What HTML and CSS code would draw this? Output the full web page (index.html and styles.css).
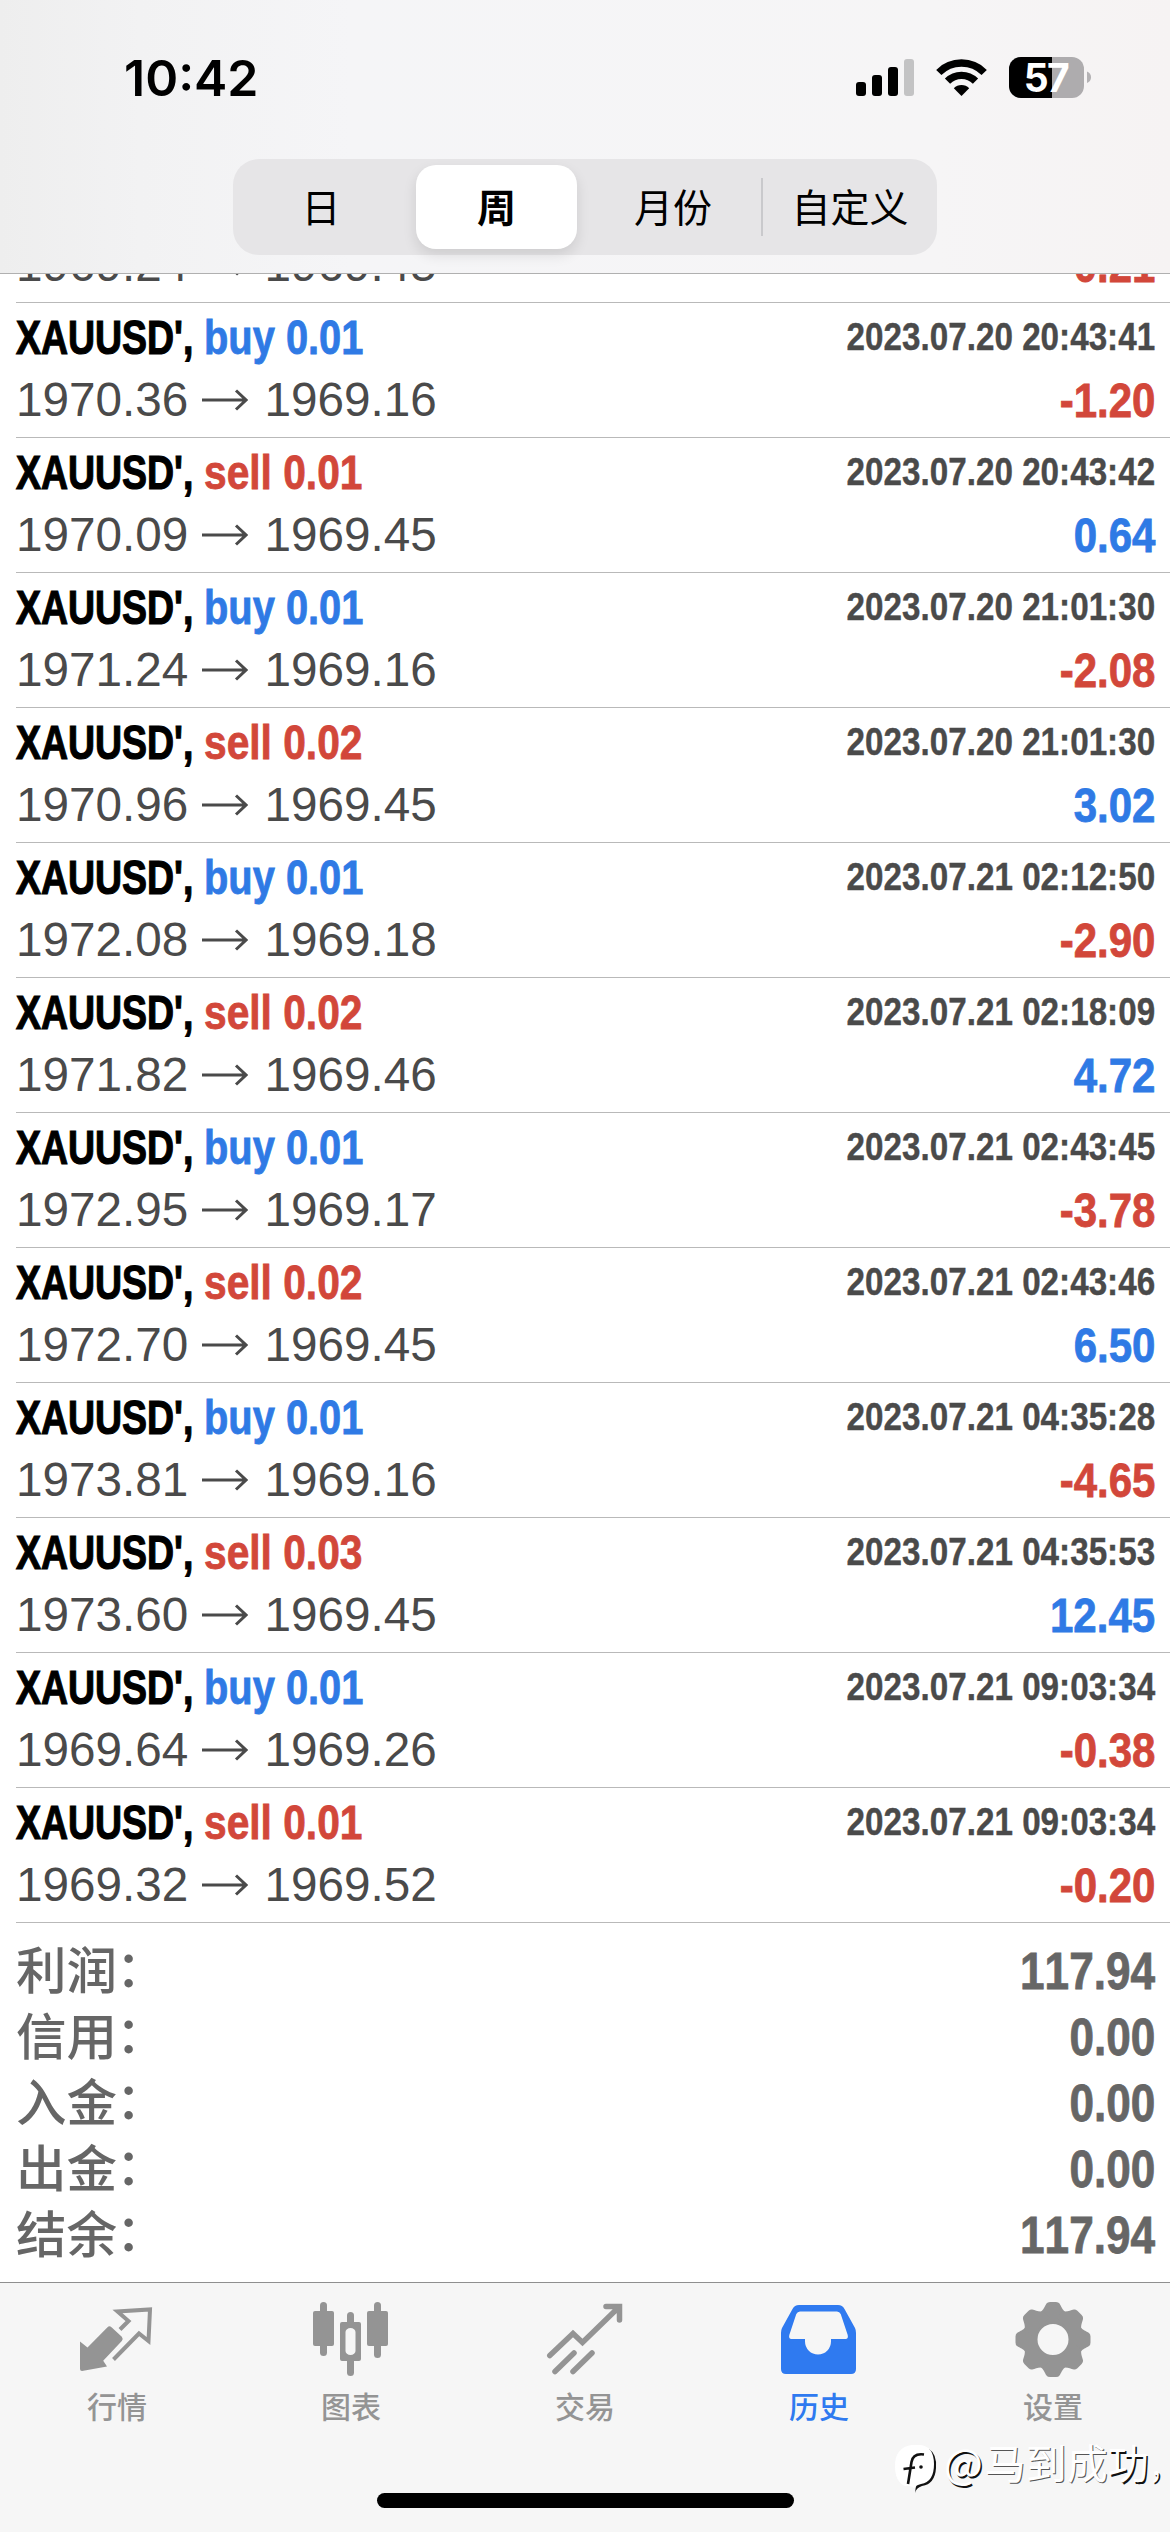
FILE: index.html
```html
<!DOCTYPE html>
<html lang="zh-CN">
<head>
<meta charset="utf-8">
<title>历史</title>
<link rel="stylesheet" href="styles.css">
</head>
<body>
<div class="screen">
  <header class="header">
    <div class="status">
      <span class="clock">10:42</span>
      <svg class="status-icons" width="240" height="48" viewBox="856 54 240 48">
        <rect x="856" y="82" width="10" height="14" rx="3"/>
        <rect x="872" y="75" width="10" height="21" rx="3"/>
        <rect x="888" y="67" width="10" height="29" rx="3"/>
        <rect x="904" y="59" width="10" height="37" rx="3" fill="#c3c3c4"/>
        <g fill="none" stroke="#000" stroke-width="7.4">
          <path d="M938.8 72.5A32 32 0 0 1 984.2 72.5"/>
          <path d="M947.5 81.2A19.8 19.8 0 0 1 975.5 81.2"/>
        </g>
        <path d="M961.5 96L953.8 88.2A11 11 0 0 1 969.2 88.2Z"/>
        <rect x="1009" y="57" width="75" height="41" rx="12" fill="#aeacae"/>
        <path d="M1052 57H1021a12 12 0 0 0-12 12V86a12 12 0 0 0 12 12H1052Z"/>
        <path d="M1087 71.5c5.4 2 5.4 9.500 0 11.500Z" fill="#b4b2b4"/>
        <text class="charge" x="1046" y="92" text-anchor="middle">57</text>
      </svg>
    </div>
    <nav class="segments">
      <span class="segment">日</span>
      <span class="segment selected">周</span>
      <span class="segment">月份</span>
      <span class="segment divided">自定义</span>
    </nav>
  </header>

  <main class="deals">
    <div class="deal partial">
      <div class="line quote"><span class="prices">1969.24<svg class="arrow" viewBox="0 0 46 22"><path d="M0 11H44M34 1.500L44 11L34 20.500"/></svg>1969.45</span><span class="result loss">-0.21</span></div>
    </div>
    <div class="deal">
      <div class="line"><span class="title"><span class="symbol">XAUUSD',</span><span class="side buy">buy 0.01</span></span><time>2023.07.20 20:43:41</time></div>
      <div class="line quote"><span class="prices">1970.36<svg class="arrow" viewBox="0 0 46 22"><path d="M0 11H44M34 1.500L44 11L34 20.500"/></svg>1969.16</span><span class="result loss">-1.20</span></div>
    </div>
    <div class="deal">
      <div class="line"><span class="title"><span class="symbol">XAUUSD',</span><span class="side sell">sell 0.01</span></span><time>2023.07.20 20:43:42</time></div>
      <div class="line quote"><span class="prices">1970.09<svg class="arrow" viewBox="0 0 46 22"><path d="M0 11H44M34 1.500L44 11L34 20.500"/></svg>1969.45</span><span class="result gain">0.64</span></div>
    </div>
    <div class="deal">
      <div class="line"><span class="title"><span class="symbol">XAUUSD',</span><span class="side buy">buy 0.01</span></span><time>2023.07.20 21:01:30</time></div>
      <div class="line quote"><span class="prices">1971.24<svg class="arrow" viewBox="0 0 46 22"><path d="M0 11H44M34 1.500L44 11L34 20.500"/></svg>1969.16</span><span class="result loss">-2.08</span></div>
    </div>
    <div class="deal">
      <div class="line"><span class="title"><span class="symbol">XAUUSD',</span><span class="side sell">sell 0.02</span></span><time>2023.07.20 21:01:30</time></div>
      <div class="line quote"><span class="prices">1970.96<svg class="arrow" viewBox="0 0 46 22"><path d="M0 11H44M34 1.500L44 11L34 20.500"/></svg>1969.45</span><span class="result gain">3.02</span></div>
    </div>
    <div class="deal">
      <div class="line"><span class="title"><span class="symbol">XAUUSD',</span><span class="side buy">buy 0.01</span></span><time>2023.07.21 02:12:50</time></div>
      <div class="line quote"><span class="prices">1972.08<svg class="arrow" viewBox="0 0 46 22"><path d="M0 11H44M34 1.500L44 11L34 20.500"/></svg>1969.18</span><span class="result loss">-2.90</span></div>
    </div>
    <div class="deal">
      <div class="line"><span class="title"><span class="symbol">XAUUSD',</span><span class="side sell">sell 0.02</span></span><time>2023.07.21 02:18:09</time></div>
      <div class="line quote"><span class="prices">1971.82<svg class="arrow" viewBox="0 0 46 22"><path d="M0 11H44M34 1.500L44 11L34 20.500"/></svg>1969.46</span><span class="result gain">4.72</span></div>
    </div>
    <div class="deal">
      <div class="line"><span class="title"><span class="symbol">XAUUSD',</span><span class="side buy">buy 0.01</span></span><time>2023.07.21 02:43:45</time></div>
      <div class="line quote"><span class="prices">1972.95<svg class="arrow" viewBox="0 0 46 22"><path d="M0 11H44M34 1.500L44 11L34 20.500"/></svg>1969.17</span><span class="result loss">-3.78</span></div>
    </div>
    <div class="deal">
      <div class="line"><span class="title"><span class="symbol">XAUUSD',</span><span class="side sell">sell 0.02</span></span><time>2023.07.21 02:43:46</time></div>
      <div class="line quote"><span class="prices">1972.70<svg class="arrow" viewBox="0 0 46 22"><path d="M0 11H44M34 1.500L44 11L34 20.500"/></svg>1969.45</span><span class="result gain">6.50</span></div>
    </div>
    <div class="deal">
      <div class="line"><span class="title"><span class="symbol">XAUUSD',</span><span class="side buy">buy 0.01</span></span><time>2023.07.21 04:35:28</time></div>
      <div class="line quote"><span class="prices">1973.81<svg class="arrow" viewBox="0 0 46 22"><path d="M0 11H44M34 1.500L44 11L34 20.500"/></svg>1969.16</span><span class="result loss">-4.65</span></div>
    </div>
    <div class="deal">
      <div class="line"><span class="title"><span class="symbol">XAUUSD',</span><span class="side sell">sell 0.03</span></span><time>2023.07.21 04:35:53</time></div>
      <div class="line quote"><span class="prices">1973.60<svg class="arrow" viewBox="0 0 46 22"><path d="M0 11H44M34 1.500L44 11L34 20.500"/></svg>1969.45</span><span class="result gain">12.45</span></div>
    </div>
    <div class="deal">
      <div class="line"><span class="title"><span class="symbol">XAUUSD',</span><span class="side buy">buy 0.01</span></span><time>2023.07.21 09:03:34</time></div>
      <div class="line quote"><span class="prices">1969.64<svg class="arrow" viewBox="0 0 46 22"><path d="M0 11H44M34 1.500L44 11L34 20.500"/></svg>1969.26</span><span class="result loss">-0.38</span></div>
    </div>
    <div class="deal">
      <div class="line"><span class="title"><span class="symbol">XAUUSD',</span><span class="side sell">sell 0.01</span></span><time>2023.07.21 09:03:34</time></div>
      <div class="line quote"><span class="prices">1969.32<svg class="arrow" viewBox="0 0 46 22"><path d="M0 11H44M34 1.500L44 11L34 20.500"/></svg>1969.52</span><span class="result loss">-0.20</span></div>
    </div>
  </main>

  <section class="summary">
    <div class="total"><span class="label">利润<span class="colon">：</span></span><span class="amount">117.94</span></div>
    <div class="total"><span class="label">信用<span class="colon">：</span></span><span class="amount">0.00</span></div>
    <div class="total"><span class="label">入金<span class="colon">：</span></span><span class="amount">0.00</span></div>
    <div class="total"><span class="label">出金<span class="colon">：</span></span><span class="amount">0.00</span></div>
    <div class="total"><span class="label">结余<span class="colon">：</span></span><span class="amount">117.94</span></div>
  </section>

  <footer class="tabbar">
    <nav class="tabs">
      <span class="tab">
        <svg class="tab-icon" viewBox="77 2300 80 80"><path d="M120 2329.500L128.500 2321L117.500 2311.500L150 2309.500L148.500 2341L139 2333.500L113.500 2359.500" fill="none" stroke="currentColor" stroke-width="4"/><path d="M107.500 2327.200Q109.500 2325.500 111.500 2327.300L121.800 2336.800Q123.600 2339 121.800 2341L103.200 2360.800L107 2366.500L82 2371Q80 2371 80 2369V2341.500L87.500 2347.500Z" fill="currentColor"/></svg>
        <span>行情</span>
      </span>
      <span class="tab">
        <svg class="tab-icon" viewBox="311 2300 80 80" fill="currentColor"><rect x="320" y="2302" width="7" height="54" rx="3.500"/><rect x="313" y="2311" width="21" height="35" rx="2"/><rect x="347" y="2312" width="7" height="15" rx="3.500"/><rect x="347" y="2356" width="7" height="20" rx="3.500"/><path fill-rule="evenodd" d="M342 2322H359a2 2 0 0 1 2 2V2359a2 2 0 0 1-2 2H342a2 2 0 0 1-2-2V2324a2 2 0 0 1 2-2ZM350.500 2328a5 4 0 0 0-5 4V2351a5 4 0 0 0 10 0V2332a5 4 0 0 0-5-4Z"/><rect x="374" y="2302" width="7" height="56" rx="3.500"/><rect x="367" y="2311" width="21" height="35" rx="2"/></svg>
        <span>图表</span>
      </span>
      <span class="tab">
        <svg class="tab-icon" viewBox="545 2300 80 80" fill="none" stroke="currentColor" stroke-width="5.500" stroke-linecap="round"><path d="M549.800 2355.500L573 2333.500L582.500 2342.500L618.500 2307.500M606 2306.500H619.500V2320"/><path d="M555 2371.500L574 2353M573 2371.500L592 2353"/></svg>
        <span>交易</span>
      </span>
      <span class="tab active">
        <svg class="tab-icon" viewBox="779 2300 80 80"><path fill="currentColor" fill-rule="evenodd" d="M799 2305H838Q842.500 2305 844.500 2309L855 2328Q856 2330 856 2333V2369Q856 2374 851 2374H786Q781 2374 781 2369V2333Q781 2330 782 2328L792.500 2309Q794.500 2305 799 2305ZM800 2311.500Q797.500 2311.500 796.300 2314L789.300 2335Q788.400 2339 791.500 2339H805V2341.500A13 13 0 0 0 831 2341.500V2339H845.500Q848.600 2339 847.700 2335L840.700 2314Q839.500 2311.500 837 2311.500Z"/></svg>
        <span>历史</span>
      </span>
      <span class="tab">
        <svg class="tab-icon" viewBox="-40 -39.500 80 80" fill="currentColor"><defs><path id="tooth" d="M-13 -27C-9 -30 -8.500 -33 -6.500 -36Q-5.500 -37.500 -3 -37.500H3Q5.500 -37.500 6.500 -36C8.500 -33 9 -30 13 -27V-18H-13Z"/></defs><path fill-rule="evenodd" d="M0-29.500A29.500 29.500 0 0 1 0 29.500A29.500 29.500 0 0 1 0-29.500ZM0-15.500A15.500 15.500 0 0 0 0 15.500A15.500 15.500 0 0 0 0-15.500Z"/><use href="#tooth"/><use href="#tooth" transform="rotate(45)"/><use href="#tooth" transform="rotate(90)"/><use href="#tooth" transform="rotate(135)"/><use href="#tooth" transform="rotate(180)"/><use href="#tooth" transform="rotate(225)"/><use href="#tooth" transform="rotate(270)"/><use href="#tooth" transform="rotate(315)"/></svg>
        <span>设置</span>
      </span>
    </nav>
    <div class="home-indicator"></div>
    <div class="watermark">
      <svg class="mark" width="46" height="52" viewBox="893 2443 46 52"><path fill="#111" d="M929 2449Q937 2454 936 2468Q935 2484 922 2486Q916 2488 915 2493Q915.500 2483 921 2478Z"/><path fill="#fff" d="M912 2445H921Q934 2447 934 2464Q934 2482 921 2484Q916 2485 914 2488Q910 2485 905 2486Q895 2482 895 2466Q895 2447 912 2445Z"/><path d="M924 2454.500Q913 2453 911.500 2462L908 2484M903.500 2469L915 2467.500" fill="none" stroke="#111" stroke-width="2.600"/><circle cx="921" cy="2467" r="1.800" fill="#111"/></svg>
      <span class="handle"><span class="at">@</span>马到成<span class="strong">功</span><span class="comma">，</span></span>
    </div>
  </footer>
</div>
</body>
</html>
```
FILE: styles.css
```css
* { box-sizing: border-box; }

body {
  margin: 0;
  background: #fff;
  font-family: "Liberation Sans", "Noto Sans CJK SC", sans-serif;
}

.screen {
  position: relative;
  display: flex;
  flex-direction: column;
  width: 1170px;
  height: 2532px;
  overflow: hidden;
}

/* Header */
.header {
  height: 274px;
  flex: none;
  border-bottom: 1px solid #b0b0b0;
  background: linear-gradient(90deg, #eeeeee, #f2f2f3 12%, #f5f5f7 30%, #f6f5f6 80%, #f6f3f3);
}

.status {
  display: flex;
  justify-content: space-between;
  padding: 54px 74px 0 124px;
  height: 159px;
}

.clock {
  font: 600 50px/49px Inter, sans-serif;
}

.charge {
  font: 700 39px Inter, sans-serif;
  letter-spacing: -1.5px;
  fill: #fff;
}

.segments {
  display: grid;
  grid-template-columns: repeat(4, 1fr);
  width: 704px;
  height: 96px;
  margin-left: 233px;
  padding: 6px 0;
  border-radius: 26px;
  background: #e6e5e7;
}

.segment {
  display: flex;
  align-items: center;
  justify-content: center;
  padding-bottom: 5px;
  font: 400 39px/60px "Noto Sans CJK SC", sans-serif;
  color: #000;
}

.segment.selected {
  margin: 0 8px 0 7px;
  border-radius: 20px;
  background: #fff;
  box-shadow: 0 6px 14px rgba(0, 0, 0, 0.11);
  font-weight: 700;
}

.segment.divided {
  height: 58px;
  margin-top: 13px;
  padding-bottom: 31px;
  padding-top: 26px;
  border-left: 2px solid #c9c9cc;
}

/* Deals */
.deals {
  display: flex;
  flex-direction: column;
}

.deal {
  height: 135px;
  margin-left: 16px;
  padding: 5px 15px 5px 0;
  border-bottom: 1px solid #b9b9b9;
}

.deal.partial {
  display: flex;
  flex-direction: column;
  justify-content: flex-end;
  height: 29px;
  overflow: hidden;
}

.line {
  display: flex;
  justify-content: space-between;
  flex: none;
  height: 60px;
  line-height: 60px;
}

.line.quote {
  height: 64px;
  line-height: 64px;
}

.title {
  display: flex;
  font-size: 48px;
  font-weight: 700;
  line-height: 60px;
  white-space: pre;
}

/* Condensed bold lettering */
.symbol {
  width: 188px;
  color: #000;
  transform: scaleX(0.78);
  transform-origin: left;
  -webkit-text-stroke: 1.2px;
}

.side {
  transform-origin: left;
  -webkit-text-stroke: 0.8px;
}

.side.buy { transform: scaleX(0.83); }

.side.sell { transform: scaleX(0.848); }

.buy,
.gain { color: #2f7ae5; }

.sell,
.loss { color: #d2473a; }

time {
  font-size: 39px;
  font-weight: 700;
  line-height: 57px;
  font-kerning: none;
  color: #4a4a4a;
  transform: scaleX(0.852);
  transform-origin: right;
  -webkit-text-stroke: 0.4px;
}

.prices {
  display: flex;
  align-items: center;
  font-size: 47.7px;
  font-kerning: none;
  color: #4a4a4a;
}

.arrow {
  width: 46px;
  height: 22px;
  margin: 0 16px 0 14px;
  fill: none;
  stroke: #4a4a4a;
  stroke-width: 3;
}

.result {
  font-size: 48px;
  font-weight: 700;
  line-height: 65px;
  font-kerning: none;
  transform: scaleX(0.875);
  transform-origin: right;
  -webkit-text-stroke: 0.8px;
}

/* Summary */
.summary {
  padding: 15px 15px 0 16px;
  height: 359px;
}

.total {
  display: flex;
  justify-content: space-between;
  height: 66px;
  line-height: 66px;
  color: #666;
}

.label {
  font-family: "Noto Sans CJK SC", sans-serif;
  font-size: 50.5px;
  font-weight: 500;
  line-height: 59px;
}

.colon {
  line-height: 1;
  margin-left: -1px;
  vertical-align: 2px;
}

.amount {
  font-size: 51px;
  font-weight: 700;
  line-height: 67px;
  font-kerning: none;
  transform: scaleX(0.865);
  transform-origin: right;
  -webkit-text-stroke: 0.8px;
}

/* Tab bar */
.tabbar {
  flex: 1;
  display: flex;
  flex-direction: column;
  align-items: center;
  border-top: 1px solid #8f8f8f;
  background: #f6f6f6;
}

.tabs {
  display: grid;
  grid-template-columns: repeat(5, 1fr);
  width: 1170px;
  padding-top: 17px;
}

.tab {
  display: flex;
  flex-direction: column;
  align-items: center;
  font: 500 30px/44px "Noto Sans CJK SC", sans-serif;
  color: #949494;
}

.tab.active { color: #2f7af0; }

.tab-icon {
  width: 80px;
  height: 80px;
  margin-bottom: 3px;
}

.home-indicator {
  width: 417px;
  height: 15px;
  margin-top: 66px;
  border-radius: 8px;
  background: #000;
}

.watermark {
  position: absolute;
  left: 893px;
  top: 2443px;
  display: flex;
}

.handle {
  margin-left: 5px;
  font: 400 41px/37px "Noto Sans CJK SC", sans-serif;
  color: #fff;
  text-shadow: 1px 1px 0 #555;
  white-space: nowrap;
}

.at {
  margin-right: 2px;
  text-shadow: 1.5px 1.5px 0 #111;
}

.strong,
.comma { text-shadow: 1.5px 1.5px 0 #111; }

.comma {
  font-size: 34px;
  font-weight: 300;
}
```
